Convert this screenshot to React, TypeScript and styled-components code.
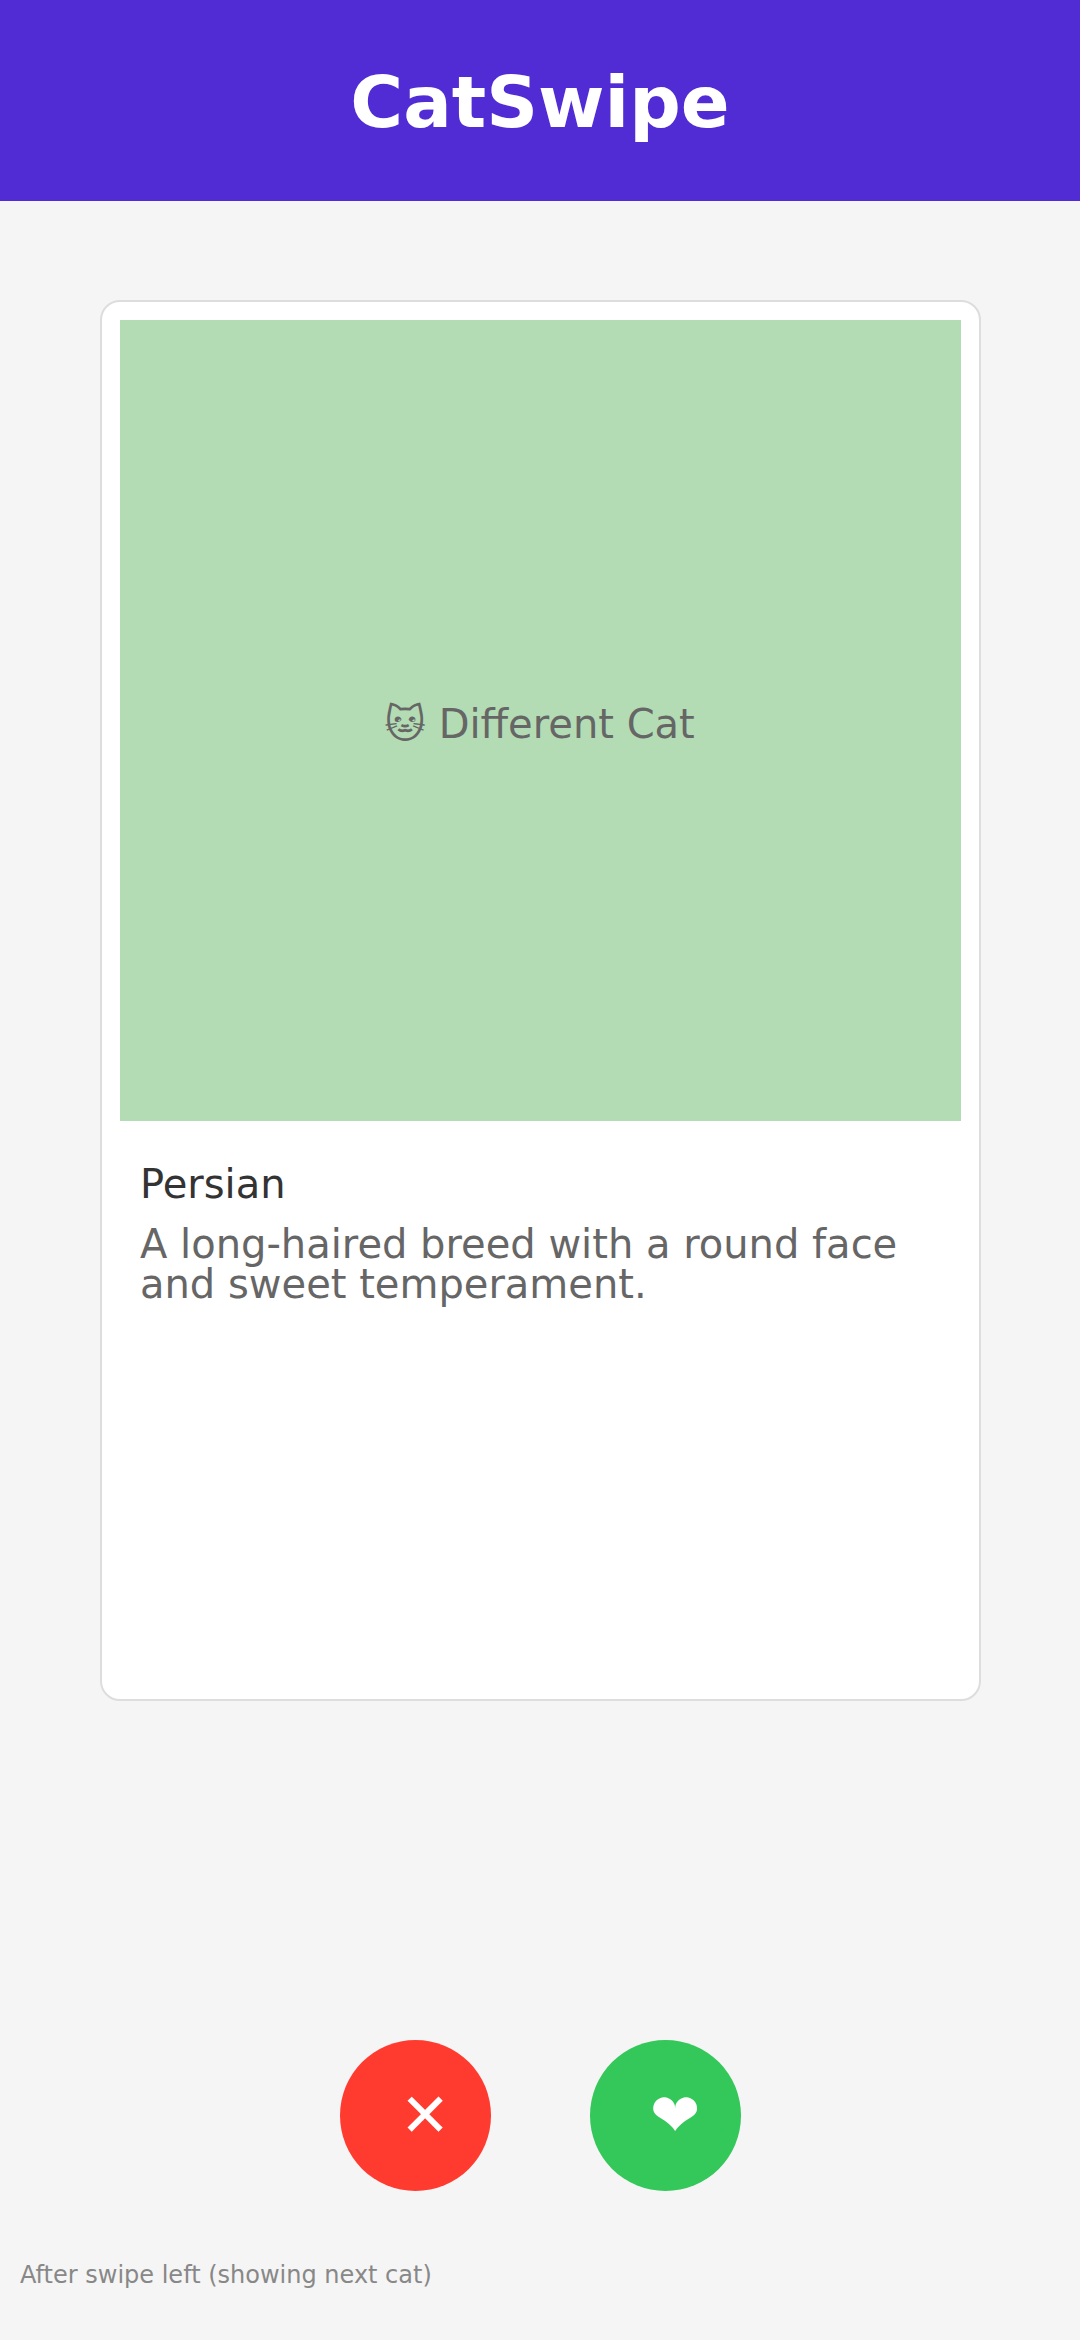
import React from 'react';
import styled, { createGlobalStyle } from 'styled-components';

const GlobalStyle = createGlobalStyle`
  *, *::before, *::after { box-sizing: border-box; }
  body { margin: 0; background: #f5f5f5; font-family: 'DejaVu Sans', sans-serif; }
`;

const Screen = styled.div`
  display: flex;
  flex-direction: column;
  width: 1080px;
  height: 2340px;
  background: #f5f5f5;
`;

const Header = styled.header`
  display: flex;
  justify-content: center;
  height: 201px;
  padding-top: 60px;
  background: #512bd4;
`;

const Title = styled.h1`
  margin: 0;
  color: #ffffff;
  font-size: 72px;
  font-weight: 700;
  line-height: 84px;
`;

const Card = styled.article`
  width: 881px;
  height: 1401px;
  margin: 99px 0 0 100px;
  padding: 18px;
  border: 2px solid #dddddd;
  border-radius: 20px;
  background: #ffffff;
`;

const Photo = styled.div`
  display: flex;
  justify-content: center;
  height: 801px;
  padding: 380px 2px 0 0;
  background: #b4dcb4;
  color: #666666;
  font-size: 40px;
  line-height: 48px;
`;

const Details = styled.div`
  padding: 40px 20px 0;
`;

const Breed = styled.h2`
  margin: 0;
  color: #333333;
  font-size: 40px;
  font-weight: 400;
  line-height: 46px;
`;

const Description = styled.p`
  margin: 17px 0 0;
  color: #666666;
  font-size: 40px;
  line-height: 40px;
`;

const Actions = styled.div`
  display: flex;
  gap: 99px;
  margin: 339px 0 0 340px;
`;

const RoundButton = styled.button<{ $color: string }>`
  display: flex;
  align-items: flex-start;
  width: 151px;
  height: 151px;
  padding: 40px 0 0 60px;
  border: 0;
  border-radius: 50%;
  background: ${(p) => p.$color};
  color: #ffffff;
  font-family: inherit;
  font-size: 60px;
  line-height: 70px;
`;

const Caption = styled.p`
  margin: 70px 0 0 20px;
  color: #888888;
  font-size: 24px;
  line-height: 28px;
`;

export default function App() {
  return (
    <Screen>
      <GlobalStyle />
      <Header>
        <Title>CatSwipe</Title>
      </Header>
      <Card>
        <Photo>🐱 Different Cat</Photo>
        <Details>
          <Breed>Persian</Breed>
          <Description>
            A long-haired breed with a round face
            <br />
            and sweet temperament.
          </Description>
        </Details>
      </Card>
      <Actions>
        <RoundButton $color="#ff3b30">✕</RoundButton>
        <RoundButton $color="#34c759">❤</RoundButton>
      </Actions>
      <Caption>After swipe left (showing next cat)</Caption>
    </Screen>
  );
}
